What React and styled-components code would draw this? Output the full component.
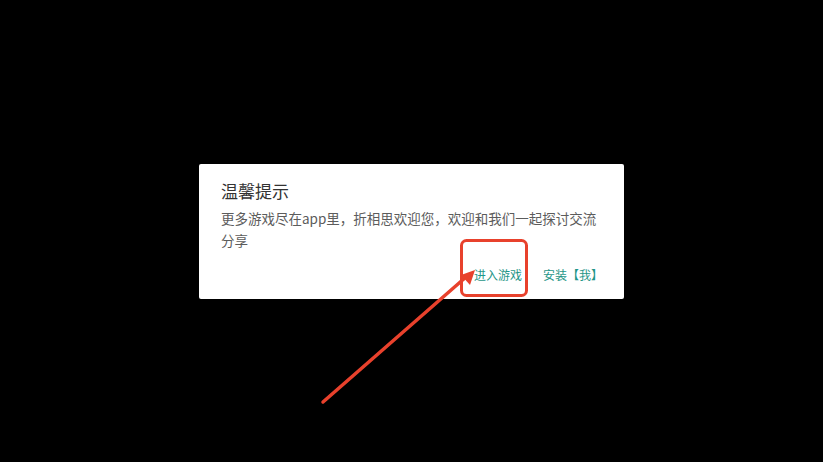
import React from 'react';
import styled, { createGlobalStyle } from 'styled-components';

const GlobalStyle = createGlobalStyle`
  html, body {
    margin: 0;
    padding: 0;
    background: #000;
  }
  body {
    font-family: "Noto Sans CJK SC", "Noto Sans", sans-serif;
  }
`;

const Screen = styled.div`
  position: relative;
  width: 823px;
  height: 462px;
  background: #000;
  display: flex;
  align-items: center;
  justify-content: center;
  overflow: hidden;
`;

const Dialog = styled.div`
  width: 425px;
  height: 135px;
  box-sizing: border-box;
  background: #fff;
  border-radius: 2px;
  padding: 15px 22px 0 22px;
  display: flex;
  flex-direction: column;
`;

const Title = styled.div`
  font-size: 17px;
  line-height: 24px;
  color: #333;
`;

const Message = styled.div`
  margin-top: 4px;
  max-width: 384px;
  font-size: 13.5px;
  line-height: 22px;
  color: #5c5c5c;
`;

const Actions = styled.div`
  display: flex;
  justify-content: flex-end;
  gap: 21px;
  margin-right: -1px;
  margin-top: 16px;
`;

const ActionButton = styled.span`
  font-size: 12px;
  line-height: 16px;
  color: #1f9688;
  cursor: pointer;
`;

const Overlay = styled.svg`
  position: absolute;
  left: 0;
  top: 0;
  pointer-events: none;
`;

const App = () => (
  <>
    <GlobalStyle />
    <Screen>
      <Dialog>
        <Title>温馨提示</Title>
        <Message>更多游戏尽在app里，折相思欢迎您，欢迎和我们一起探讨交流分享</Message>
        <Actions>
          <ActionButton>进入游戏</ActionButton>
          <ActionButton>安装【我】</ActionButton>
        </Actions>
      </Dialog>
      <Overlay width="823" height="462" viewBox="0 0 823 462">
        <rect x="461.5" y="240.5" width="65" height="55" rx="5" fill="none" stroke="#e8412c" strokeWidth="3" />
        <line x1="323" y1="402" x2="466" y2="277" stroke="#e8412c" strokeWidth="3.5" strokeLinecap="round" />
        <polygon points="475,270 461,275 470,285" fill="#e8412c" />
      </Overlay>
    </Screen>
  </>
);

export default App;
